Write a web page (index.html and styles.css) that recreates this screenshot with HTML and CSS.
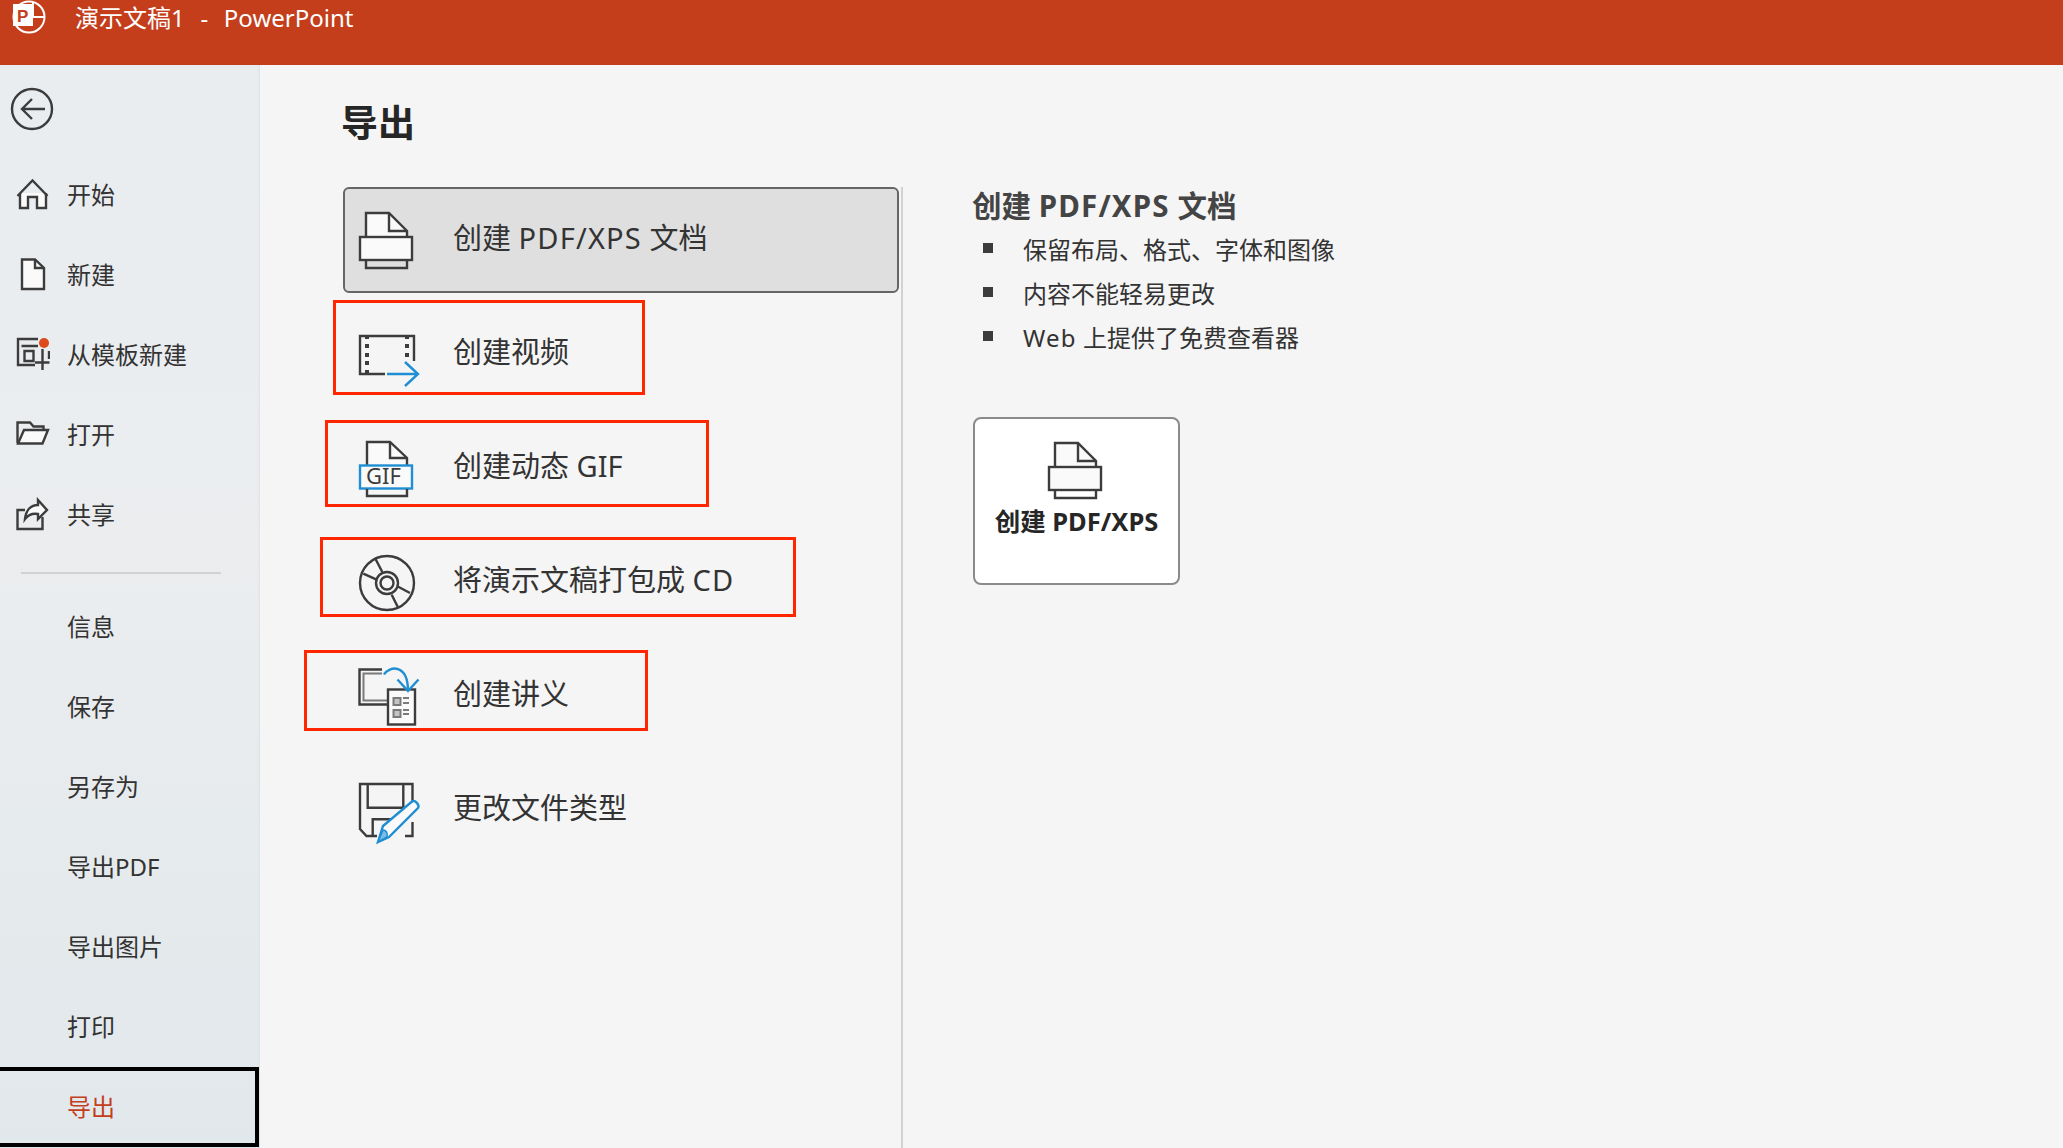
FILE: index.html
```html
<!DOCTYPE html>
<html lang="zh-CN">
<head>
<meta charset="utf-8">
<title>演示文稿1 - PowerPoint</title>
<link rel="stylesheet" href="styles.css">
</head>
<body>
<header class="titlebar">
  <svg class="logo" viewBox="0 0 40 36">
    <circle cx="20" cy="17" r="15.5" class="logo-ring"/>
    <path d="M24 2V17H36" class="logo-ring"/>
    <rect x="4" y="4" width="20" height="22" class="logo-page"/>
    <text x="8" y="22" class="logo-p">P</text>
  </svg>
  <span class="doc-title">演示文稿1&nbsp; -&nbsp; PowerPoint</span>
</header>
<div class="app">
  <nav class="sidebar">
    <div class="back">
      <svg class="back-icon" viewBox="0 0 44 44">
        <circle cx="22" cy="22" r="20" class="line"/>
        <path d="M35 22H12M22 12L12 22L22 32" class="line"/>
      </svg>
    </div>
    <a class="nav-item">
      <svg class="nav-icon" viewBox="0 0 34 34"><path d="M4 16V31H12V20H21V31H30V16" class="line fill"/><path d="M1.5 19L16.5 3.5L31.5 19" class="line"/></svg>
      <span>开始</span>
    </a>
    <a class="nav-item">
      <svg class="nav-icon" viewBox="0 0 34 34"><path d="M6 2.5V32H28V11L19 2.5Z" class="line fill"/><path d="M19 2.5V11H28" class="line"/></svg>
      <span>新建</span>
    </a>
    <a class="nav-item">
      <svg class="nav-icon" viewBox="0 0 34 34">
        <path d="M22 2H2V28H19" class="line"/><path d="M5.5 9H22M8.5 14H17.5V24H8.5Z" class="line"/>
        <path d="M26.5 12V33M19 25.5H33.5" class="line"/><path d="M33 14V22" class="line"/>
        <circle cx="28" cy="6" r="5" class="dot"/>
      </svg>
      <span>从模板新建</span>
    </a>
    <a class="nav-item">
      <svg class="nav-icon" viewBox="0 0 34 34"><path d="M1.5 26V5.5H14L17.5 9.5H27.5V13" class="line"/><path d="M2 26.5H26.5L32 13H8Z" class="line fill"/></svg>
      <span>打开</span>
    </a>
    <a class="nav-item">
      <svg class="nav-icon" viewBox="0 0 34 34"><path d="M9 13H1.5V32H26.5V20" class="line"/><path d="M9 22C10 13 15 8 22 8V3L31 13L22 22V17C16 16 12 18 9 22Z" class="line fill"/></svg>
      <span>共享</span>
    </a>
    <hr class="nav-divider">
    <a class="nav-item"><span>信息</span></a>
    <a class="nav-item"><span>保存</span></a>
    <a class="nav-item"><span>另存为</span></a>
    <a class="nav-item"><span>导出PDF</span></a>
    <a class="nav-item"><span>导出图片</span></a>
    <a class="nav-item"><span>打印</span></a>
    <a class="nav-item nav-selected"><span>导出</span></a>
  </nav>
  <main class="content">
    <h1 class="page-title">导出</h1>
    <div class="columns">
      <div class="options">
        <div class="option option-selected">
          <svg class="option-icon" viewBox="0 0 60 60">
            <path d="M8 27V3H31L49 21V27" class="line fill"/><path d="M31 3V21H49" class="line"/>
            <rect x="2" y="27" width="52" height="23" class="line fill"/><path d="M8 50V58H49V50" class="line"/>
          </svg>
          <span>创建 <b class="latin">PDF/XPS</b> 文档</span>
        </div>
        <div class="option">
          <svg class="option-icon" viewBox="0 0 60 60">
            <path d="M27 50H2V12H56V37" class="line"/>
            <path d="M7 12h4v3h-4zM7 20h4v4h-4zM7 29h4v4h-4zM7 37h4v4h-4zM7 46h4v3h-4zM47 12h4v3h-4zM47 20h4v4h-4zM47 29h4v4h-4z" class="solid"/>
            <path d="M29 50H60M47 38L60 50L47 62" class="blue"/>
          </svg>
          <span>创建视频</span>
        </div>
        <div class="option">
          <svg class="option-icon" viewBox="0 0 60 60">
            <path d="M9 27V4H32L49 20V27" class="line fill"/><path d="M32 4V20H49" class="line"/>
            <rect x="2" y="27.500" width="52" height="23" class="blue fill"/>
            <text x="8" y="46" class="gif">GIF</text>
            <path d="M9 51V58H49V51" class="line"/>
          </svg>
          <span>创建动态 GIF</span>
        </div>
        <div class="option">
          <svg class="option-icon" viewBox="0 0 60 60">
            <circle cx="29" cy="31" r="27" class="line"/>
            <circle cx="29" cy="31" r="11" class="line"/>
            <circle cx="29" cy="31" r="6.500" class="line"/>
            <path d="M17 6L24.300 20M5.300 21.700L18.700 27.700M39.300 34.300L52 41M33.700 42.700L40.300 56" class="line"/>
          </svg>
          <span>将演示文稿打包成 <b class="latin">CD</b></span>
        </div>
        <div class="option">
          <svg class="option-icon" viewBox="0 0 60 60">
            <path d="M24 3.500H1.500V38.500H29" class="line"/>
            <path d="M24 7.500H5.500V34.500H29" class="gray"/>
            <rect x="30" y="23.500" width="27" height="35" class="line fill"/>
            <path d="M35.500 32h7v7h-7zM35.500 44h7v7h-7z" class="gray-box"/>
            <path d="M45 32H51M45 37H51M45 44H51M45 48H51" class="gray"/>
            <path d="M26 8.500C31 0 50 -3 50 25M39.500 13.500L50 25L60.500 13.500" class="blue"/>
          </svg>
          <span>创建讲义</span>
        </div>
        <div class="option">
          <svg class="option-icon" viewBox="0 0 60 60">
            <path d="M19 56H8.500L2 49V4H54.500V24M54.500 42V56H47" class="line"/>
            <path d="M9.700 4V27.700H45.300V4M14.700 56V39.300H35" class="line"/>
            <path d="M20 62L25 46L54 21.500C57 19.500 62 25 60 28L31 57Z" class="blue fill"/>
            <path d="M20 62L25 50C28 50 30 53 29 57Z" class="blue-solid"/>
          </svg>
          <span>更改文件类型</span>
        </div>
        <div class="annot annot-video"></div>
        <div class="annot annot-gif"></div>
        <div class="annot annot-cd"></div>
        <div class="annot annot-handout"></div>
      </div>
      <section class="detail">
        <h2 class="detail-title">创建 <b class="latin">PDF/XPS</b> 文档</h2>
        <ul class="detail-list">
          <li>保留布局、格式、字体和图像</li>
          <li>内容不能轻易更改</li>
          <li><span><b class="latin">Web</b> 上提供了免费查看器</span></li>
        </ul>
        <button class="action">
          <svg class="action-icon" viewBox="0 0 60 60">
            <path d="M8 27V3H31L49 21V27" class="line fill"/><path d="M31 3V21H49" class="line"/>
            <rect x="2" y="27" width="52" height="23" class="line fill"/><path d="M8 50V58H49V50" class="line"/>
          </svg>
          <span>创建 PDF/XPS</span>
        </button>
      </section>
    </div>
  </main>
</div>
</body>
</html>
```
FILE: styles.css
```css
* { box-sizing: border-box; }
html, body { margin: 0; padding: 0; height: 1148px; overflow: hidden; }
body {
  background: #f5f5f5;
  color: #333;
  font-family: "Noto Sans", "Noto Sans CJK SC", sans-serif;
  display: flex;
  flex-direction: column;
}
.titlebar {
  height: 65px;
  flex: none;
  background: #c43e1c;
  color: #fff;
  display: flex;
  align-items: flex-start;
}
.logo { width: 40px; height: 36px; margin-left: 9px; flex: none; }
.logo-ring { fill: none; stroke: #fff; stroke-width: 2; }
.logo-page { fill: #fff; }
.logo-p { fill: #c43e1c; font: bold 17px "Liberation Sans", sans-serif; }
.doc-title { margin-left: 26px; font-size: 24px; line-height: 35px; font-weight: 400; white-space: pre; word-spacing: 1.6px; }
.app { display: flex; flex: 1; min-height: 0; }

.sidebar {
  width: 260px;
  flex: none;
  display: flex;
  flex-direction: column;
  background: linear-gradient(180deg, #e9edf0 0%, #ebedef 45%, #e1e8eb 100%);
  box-shadow: inset -2px 0 2px -1px #dfe2e4;
}
.back { height: 90px; padding: 22px 0 0 10px; flex: none; }
.back-icon { width: 44px; height: 44px; display: block; }
.nav-item {
  height: 80px;
  flex: none;
  display: flex;
  align-items: center;
  padding-left: 67px;
  position: relative;
  font-size: 24px;
  color: #333;
}
.nav-item > span { position: relative; top: -2px; }
.nav-icon { width: 34px; height: 34px; position: absolute; left: 16px; top: 22px; }
.nav-divider { border: 0; height: 2px; background: #cfd1d3; margin: 17px 39px 13px 21px; flex: none; }
.nav-selected {
  width: 259px;
  color: #c43e1c;
  border: 4px solid #000;
  border-left: 0;
}

.line { fill: none; stroke: #3c3c3c; stroke-width: 2.4; }
.line.fill { fill: #fafafa; }
.dot { fill: #dd4a1c; }
.solid { fill: #3c3c3c; }
.blue { fill: none; stroke: #1f8ed2; stroke-width: 2.4; }
.blue.fill { fill: #fafafa; }
.blue-solid { fill: #7dbce6; stroke: #1f8ed2; stroke-width: 1.5; }
.gray { fill: none; stroke: #7a7a7a; stroke-width: 2; }
.gray-box { fill: #c4c4c4; stroke: #7a7a7a; stroke-width: 2; }
.gif { fill: #3c3c3c; font: 22px "Noto Sans", sans-serif; }
.latin { font-weight: inherit; letter-spacing: 1.2px; }

.content { flex: 1; min-width: 0; padding-left: 81px; }
.page-title { margin: 0; height: 122px; font-size: 37px; line-height: 36px; padding-top: 40px; font-weight: 700; color: #262626; }
.columns { display: flex; }
.options {
  width: 563px;
  height: 961px;
  flex: none;
  padding-left: 2px;
  position: relative;
  display: flex;
  flex-direction: column;
  gap: 9px;
}
.options::after { content: ""; position: absolute; left: 560px; top: 0; bottom: 0; width: 2px; background: #d2d2d2; }
.option {
  height: 105px;
  flex: none;
  width: 556px;
  display: flex;
  align-items: center;
  padding-left: 15px;
  font-size: 29px;
  color: #333;
  border-radius: 6px;
  border: 2px solid transparent;
}
.option > span { margin-left: 35px; position: relative; top: -4px; }
.option-icon { width: 60px; height: 60px; flex: none; overflow: visible; margin-left: -2px; }
.option-selected { background: #dfdfdf; border-color: #666; height: 106px; margin-bottom: -1px; }
.annot { position: absolute; border: 3px solid #ff2600; }
.annot-video { left: -8px; top: 113px; width: 312px; height: 95px; }
.annot-gif { left: -16px; top: 233px; width: 384px; height: 87px; }
.annot-cd { left: -21px; top: 350px; width: 476px; height: 80px; }
.annot-handout { left: -37px; top: 463px; width: 344px; height: 81px; }

.detail { padding-left: 68px; margin-top: -1px; }
.detail-title { margin: 0; font-size: 29.5px; line-height: 40px; font-weight: 700; color: #444; }
.detail-list { list-style: none; margin: 0; padding: 0; }
.detail-list li {
  height: 44px;
  display: flex;
  align-items: center;
  font-size: 24px;
  color: #333;
  padding-left: 11px;
}
.detail-list li::before { content: ""; width: 10px; height: 10px; background: #3c3c3c; margin-right: 30px; flex: none; }
.action {
  margin: 59px 0 0 1px;
  width: 207px;
  height: 168px;
  background: #fff;
  border: 2px solid #8a8a8a;
  border-radius: 8px;
  display: flex;
  flex-direction: column;
  align-items: center;
  padding: 21px 0 0;
  font-family: inherit;
  font-size: 25.5px;
  font-weight: 700;
  color: #262626;
}
.action-icon { width: 60px; height: 60px; flex: none; }
.action > span { line-height: 36px; margin-top: 3px; white-space: nowrap; }
```
